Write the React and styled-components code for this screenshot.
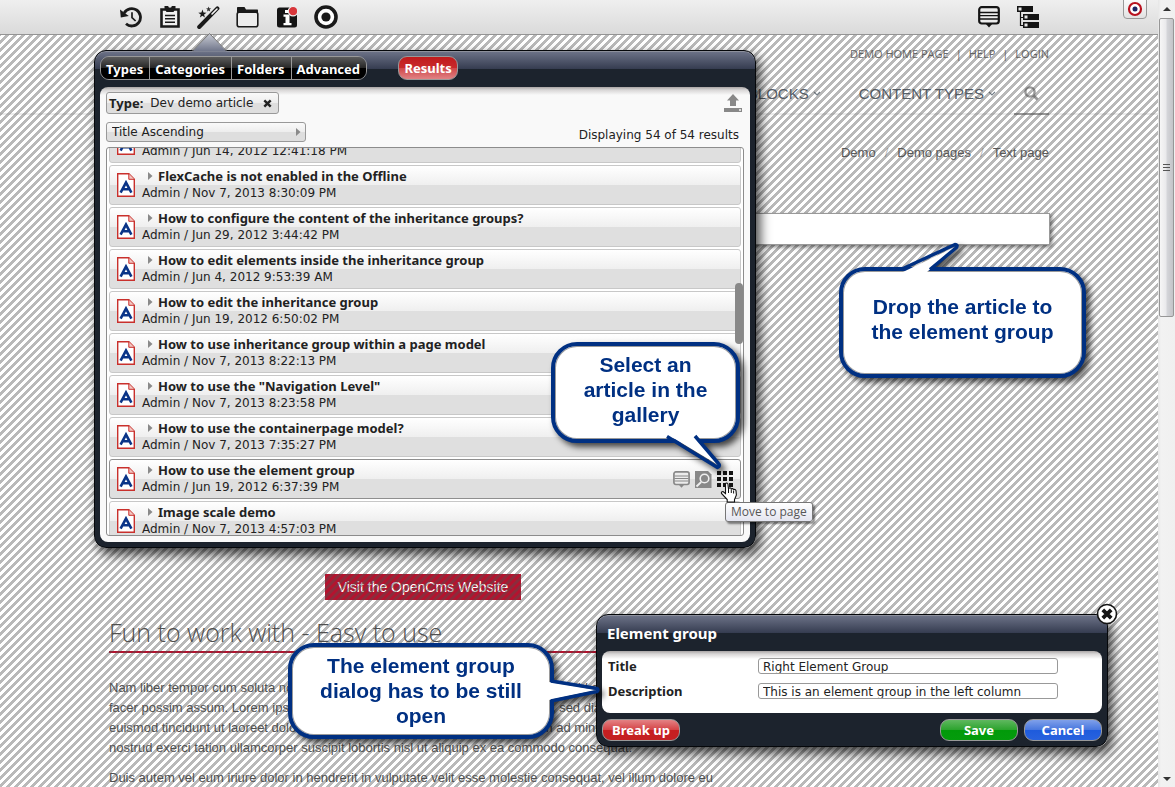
import React from "react";
import styled, { createGlobalStyle, css } from "styled-components";

const UI = `"Noto Sans", "Open Sans", sans-serif`;
const UI_WIDE = `"DejaVu Sans", "Noto Sans", sans-serif`;
const SITE = `"Liberation Sans", Arial, sans-serif`;
const NAVY = "#003082";

const Global = createGlobalStyle`
  * { box-sizing: border-box; }
  body { margin: 0; background: #fff; color: #222; font-family: ${UI}; }
  h1, h2, p, ul { margin: 0; padding: 0; }
  ul { list-style: none; }
  button, input, select { font: inherit; color: inherit; margin: 0; }
  button { cursor: pointer; }
  svg { display: block; }
`;

const Shell = styled.div`
  display: flex;
  height: 100vh;
  overflow: hidden;
`;

const Viewport = styled.div`
  position: relative;
  flex: 1;
  min-width: 0;
  overflow: hidden;
`;

/* ---------- toolbar ---------- */

const Toolbar = styled.header`
  position: relative;
  z-index: 3;
  display: flex;
  justify-content: space-between;
  height: 35px;
  padding: 0 111px;
  background: linear-gradient(#efefef, #dadada);
  border-bottom: 1px solid #949494;
`;

const ToolGroup = styled.div`
  display: flex;
  align-items: center;
`;

const ToolButton = styled.button`
  display: flex;
  align-items: center;
  justify-content: center;
  width: 39px;
  height: 34px;
  padding: 0;
  border: 0;
  background: none;
`;

const Toggle = styled.button`
  position: absolute;
  top: -1px;
  right: 11px;
  display: flex;
  align-items: center;
  justify-content: center;
  width: 24px;
  height: 20px;
  padding: 0;
  border: 1px solid #999;
  border-radius: 0 0 4px 4px;
  background: linear-gradient(#fafafa, #e2e2e2);
`;

/* ---------- web site below the hatch ---------- */

const Site = styled.main`
  position: relative;
  font-family: ${SITE};
  font-size: 13px;
  line-height: 20px;
  color: #505050;
`;

const Hatch = styled.div`
  position: absolute;
  inset: 0;
  z-index: 1;
  pointer-events: none;
  background: linear-gradient(
    135deg,
    rgba(80, 80, 80, 0.4) 25%,
    transparent 25%,
    transparent 50%,
    rgba(80, 80, 80, 0.4) 50%,
    rgba(80, 80, 80, 0.4) 75%,
    transparent 75%
  );
  background-size: 8px 8px;
`;

const Container = styled.div`
  width: 940px;
  margin: 0 auto;
`;

const MetaNav = styled.nav`
  display: flex;
  justify-content: flex-end;
  gap: 7px;
  padding-top: 9px;
  font-family: "Open Sans", sans-serif;
  font-size: 11px;
  color: #6a6a6a;
  a { color: inherit; text-decoration: none; }
`;

const NavBar = styled.div`
  margin-top: 9px;
  border-bottom: 2px solid #ececec;
`;

const Nav = styled.nav`
  display: flex;
  justify-content: flex-end;
  align-items: center;
  height: 42px;
  margin-bottom: -2px;
  font-size: 15px;
  color: #56606a;
`;

const NavLink = styled.a`
  display: flex;
  align-items: center;
  gap: 4px;
  margin-left: 38px;
  color: inherit;
  text-decoration: none;
`;

const SearchLink = styled.a`
  display: flex;
  align-items: center;
  justify-content: center;
  align-self: stretch;
  width: 35px;
  margin-left: 18px;
  border-bottom: 2px solid #999;
  color: #999;
`;

const Breadcrumb = styled.nav`
  display: flex;
  justify-content: flex-end;
  gap: 9px;
  padding-top: 28px;
  color: #5c5c5c;
  a { color: inherit; text-decoration: none; }
  span { color: #bbb; }
`;

const GroupBox = styled.div`
  position: relative;
  z-index: 2;
  height: 32px;
  margin: 50px -1px 0 640px;
  background: #fff;
  border: 1px solid #999;
  box-shadow: 2px 2px 4px rgba(0, 0, 0, 0.5);
`;

const Column = styled.div`
  width: 628px;
  margin-top: 329px;
  p { margin: 0 20px 10px 0; }
`;

const VisitLink = styled.a`
  display: block;
  width: fit-content;
  margin: 0 auto;
  padding: 0 13px;
  font-size: 14px;
  line-height: 26px;
  color: #fff;
  background: #b3142f;
  text-decoration: none;
`;

const Headline = styled.h2`
  margin: 16px 0 25px;
  padding-bottom: 2px;
  border-bottom: 2px solid #b3142f;
  font-family: "Open Sans", sans-serif;
  font-size: 25px;
  font-weight: 300;
  line-height: 33px;
`;

/* ---------- popups ---------- */

const Popup = styled.section`
  position: absolute;
  z-index: 4;
  display: flex;
  flex-direction: column;
  padding: 5px;
  border: 1px solid #05070a;
  border-radius: 12px;
  color: #222;
  font-size: 13px;
  line-height: 16px;
  background: linear-gradient(#6e7489, #353c50 18px, #1c232d 18px);
  box-shadow: inset 0 1px #8d909c, 4px 6px 12px rgba(0, 0, 0, 0.75);
`;

const Gallery = styled(Popup)`
  left: 94px;
  top: 50px;
  width: 662px;
  height: 498px;
`;

const GroupDialog = styled(Popup)`
  left: 596px;
  top: 614px;
  width: 512px;
`;

const Arrow = styled.svg`
  position: absolute;
  left: 97px;
  top: -19px;
`;

const Panel = styled.div`
  border-radius: 8px;
  background: linear-gradient(#a9a5a5, #d8d6d6 3px, ${(p) => p.$bg} 8px);
`;

const TabRow = styled.div`
  display: flex;
  gap: 31px;
  margin-bottom: 7px;
`;

const Tabs = styled.div`
  display: flex;
  height: 24px;
  overflow: hidden;
  border: 1px solid #999;
  border-radius: 9px;
`;

const Tab = styled.button`
  padding: 2px 6px 0 5px;
  border: 0;
  background: linear-gradient(#5c5c5c, #262626 50%, #000 50%);
  color: #fff;
  font-weight: 700;
  & + & { border-left: 1px solid #999; }
`;

const tones = {
  red: "linear-gradient(#e48284, #d44244 50%, #c61e20 50%, #c42022)",
  redActive: "linear-gradient(#c01a1c, #c92a2c 50%, #d04648 50%, #e08284)",
  green: "linear-gradient(#5fb85f, #2ba32d 50%, #029a0a 50%, #049c0c)",
  blue: "linear-gradient(#7fa0ea, #4776de 50%, #1e5bdc 50%, #2862de)",
};

const Pill = styled.button`
  height: ${(p) => p.$height || 22}px;
  min-width: ${(p) => p.$width || 60}px;
  padding: 0 5px;
  border: 1px solid #999;
  border-radius: 9px;
  color: #fff;
  font-weight: 700;
  background: ${(p) => tones[p.$tone]};
`;

const GalleryPanel = styled(Panel)`
  display: flex;
  flex: 1;
  flex-direction: column;
  min-height: 0;
  padding: 5px 6px 6px;
`;

const Split = styled.div`
  display: flex;
  justify-content: space-between;
  align-items: center;
  height: ${(p) => p.$height}px;
  margin-bottom: ${(p) => p.$gap}px;
`;

const raised = css`
  border: 1px solid #999;
  border-radius: 3px;
  background: linear-gradient(#fafafa, #ededed 50%, #dedede 50%);
`;

const Chip = styled.div`
  ${raised}
  display: flex;
  align-items: center;
  height: 22px;
  padding: 0 6px 0 2px;
  font-family: ${UI_WIDE};
  font-size: 12px;
  b { margin-right: 7px; font-family: ${UI}; font-size: 13px; }
  button { display: flex; margin-left: 10px; padding: 0; border: 0; background: none; }
`;

const SelectWrap = styled.label`
  position: relative;
  svg { position: absolute; right: 5px; top: 6px; pointer-events: none; }
`;

const Sort = styled.select`
  ${raised}
  appearance: none;
  display: block;
  width: 200px;
  height: 20px;
  padding: 0 5px;
  font-family: ${UI_WIDE};
  font-size: 12px;
  line-height: 18px;
`;

const Count = styled.p`
  padding: 6px 5px 0 0;
  font-family: ${UI_WIDE};
  font-size: 12px;
`;

const UploadButton = styled.button`
  display: flex;
  margin-right: 2px;
  padding: 0;
  border: 0;
  background: none;
`;

const ListFrame = styled.div`
  position: relative;
  flex: 1;
  min-height: 0;
  overflow: hidden;
  border: 1px solid #8c8c8c;
  border-radius: 3px;
  background: #fff;
`;

const List = styled.ul`
  display: flex;
  flex-direction: column;
  gap: 2px;
  margin-top: -25px;
  padding: 0 2px;
`;

const Row = styled.li`
  display: flex;
  flex: none;
  align-items: center;
  height: 40px;
  padding: 0 7px;
  border: 1px solid ${(p) => (p.$active ? "#8f8f8f" : "#c8c8c8")};
  border-radius: 3px;
  background: linear-gradient(#fff, #efefef 50%, #dfdfdf 50%);
`;

const RowText = styled.div`
  flex: 1;
  padding-left: 7px;
  p { font-family: ${UI_WIDE}; font-size: 12px; line-height: 18px; }
`;

const RowTitle = styled.h2`
  display: flex;
  align-items: center;
  gap: 5px;
  height: 16px;
  padding-left: 6px;
  font-size: 13px;
  font-weight: 700;
  line-height: 16px;
`;

const RowActions = styled.div`
  display: flex;
  gap: 5px;
  button { padding: 0; border: 0; background: none; }
`;

const Thumb = styled.div`
  position: absolute;
  right: 0;
  top: 135px;
  width: 8px;
  height: 61px;
  border-radius: 4px;
  background: #888;
`;

const Title = styled.h1`
  padding: 4px 5px 9px;
  color: #fff;
  font-size: 15px;
  line-height: 18px;
`;

const Form = styled(Panel)`
  display: grid;
  grid-template-columns: 150px 300px;
  align-items: center;
  row-gap: 9px;
  padding: 7px 6px 14px;
  label { font-weight: 700; }
  input {
    height: 16px;
    padding: 1px 4px 0;
    border: 1px solid #999;
    border-radius: 3px;
    background: #fff;
    font-family: ${UI_WIDE};
    font-size: 12px;
  }
`;

const Footer = styled.footer`
  display: flex;
  gap: 6px;
  padding-top: 6px;
  button:first-child { margin-right: auto; }
`;

const Close = styled.button`
  position: absolute;
  right: -11px;
  top: -12px;
  width: 22px;
  height: 22px;
  padding: 0;
  border: 0;
  background: none;
`;

/* ---------- annotations ---------- */

const Bubble = styled.aside`
  position: absolute;
  z-index: 6;
  left: ${(p) => p.$x}px;
  top: ${(p) => p.$y}px;
  display: flex;
  align-items: center;
  justify-content: center;
  width: ${(p) => p.$w}px;
  height: ${(p) => p.$h}px;
  padding-bottom: ${(p) => p.$lift || 0}px;
  border: 4px solid ${NAVY};
  border-radius: 26px;
  background: #fff;
  box-shadow: inset 0 0 0 1px #9a9a9a;
  filter: drop-shadow(4px 4px 3px rgba(0, 0, 0, 0.7));
  color: ${NAVY};
  font-family: ${SITE};
  font-size: 21px;
  font-weight: 700;
  line-height: 25px;
  text-align: center;
`;

const Tail = styled.svg`
  position: absolute;
  left: ${(p) => p.$x}px;
  top: ${(p) => p.$y}px;
  overflow: visible;
`;

const Tooltip = styled.div`
  position: absolute;
  z-index: 5;
  left: 725px;
  top: 502px;
  padding: 0 5px;
  border: 1px solid #767676;
  border-radius: 3px;
  background: linear-gradient(#fff, #e4e5f0);
  box-shadow: 2px 2px 2px rgba(0, 0, 0, 0.45);
  color: #575757;
  font-family: "Open Sans", sans-serif;
  font-size: 12px;
  line-height: 18px;
`;

const Hand = styled.svg`
  position: absolute;
  z-index: 7;
  left: 720px;
  top: 482px;
`;

/* ---------- window scroll bar ---------- */

const ScrollTrack = styled.div`
  display: flex;
  flex-direction: column;
  align-items: center;
  width: 17px;
  padding: 7px 1px 6px;
  background: linear-gradient(90deg, #e6e6e6, #f2f2f2 3px, #f0f0f0);
`;

const ScrollHandle = styled.div`
  display: flex;
  flex-direction: column;
  align-items: center;
  justify-content: center;
  gap: 2px;
  width: 15px;
  height: 299px;
  margin: 7px 0 auto;
  border: 1px solid #979797;
  border-radius: 2px;
  background: linear-gradient(90deg, #f6f6f6, #e9e9eb 48%, #d5d6da 52%, #c4c4c8);
  i { width: 7px; height: 1px; background: #555; }
`;

/* ---------- icons ---------- */

const Chevron = () => (
  <svg width="8" height="6" viewBox="0 0 8 6"><path d="M1 1l3 3 3-3" fill="none" stroke="#76808a" strokeWidth="1.2" /></svg>
);

const Cross = ({ size = 9, color = "#222" }) => (
  <svg width={size} height={size} viewBox="0 0 9 9"><path d="M1.3 1.3l6.4 6.4M7.7 1.3L1.3 7.7" stroke={color} strokeWidth="2.4" /></svg>
);

const Caret = () => (
  <svg width="5" height="8" viewBox="0 0 5 8"><path d="M0 0l4.5 4L0 8z" fill="#8a8a8a" /></svg>
);

const HistoryIcon = () => (
  <svg width="22" height="22" viewBox="0 0 22 22">
    <path d="M4.200 7A8.700 8.700 0 1 1 6 17.800" fill="none" stroke="#1a1a1a" strokeWidth="2.800" />
    <path d="M0 3.400L.8 11.400l8-1.400z" fill="#1a1a1a" />
    <path d="M12 6.200v5.400l3.600 3.400" fill="none" stroke="#1a1a1a" strokeWidth="1.700" />
  </svg>
);

const ClipboardIcon = () => (
  <svg width="20" height="22" viewBox="0 0 20 22">
    <path d="M1.500 3.500h17v17h-17z" fill="#f0f0f0" stroke="#1a1a1a" strokeWidth="2.600" />
    <path d="M4.500 0h3.700a1.800 1.800 0 0 0 3.600 0h3.700v2.600l-2 3.400h-7l-2-3.400z" fill="#1a1a1a" />
    <path d="M5 9.500h10M5 12.800h10M5 16.200h10" stroke="#1a1a1a" strokeWidth="1.500" />
  </svg>
);

const WandIcon = () => (
  <svg width="23" height="23" viewBox="0 0 23 23">
    <path d="M2.200 21L20.400 2.400" stroke="#1a1a1a" strokeWidth="4" strokeLinecap="round" />
    <path d="M15 8l5-5" stroke="#f6f6f6" strokeWidth="1.600" strokeLinecap="round" />
    <path d="M5.500 3.400l1 3 3 .3-2.400 1.800.8 3-2.500-1.700-2.500 1.700.9-3L1.300 6.700l3.100-.2z" fill="#1a1a1a" />
    <path d="M11.600.6l.7 1.700 1.900.1-1.500 1.200.5 1.800-1.600-1-1.600 1 .5-1.800L9 2.400l1.900-.1z" fill="#333" />
  </svg>
);

const FolderIcon = () => (
  <svg width="23" height="22" viewBox="0 0 23 22">
    <path d="M1 7V1.800Q1 1 1.800 1h6.700L10 3.600h11.400q.6 0 .6.600V8H1z" fill="#1a1a1a" />
    <rect x="1.200" y="6.200" width="20.600" height="14.600" rx="2" fill="#ececec" stroke="#1a1a1a" strokeWidth="1.600" />
  </svg>
);

const InfoIcon = () => (
  <svg width="22" height="22" viewBox="0 0 22 22">
    <rect x="1" y="1.500" width="20" height="20" rx="2.500" fill="#141414" />
    <rect x="9" y="4" width="4" height="3" fill="#fff" />
    <path d="M7.500 8.500h6v8.500h2v2.200h-8V17h2v-6.300h-2z" fill="#fff" />
    <circle cx="17" cy="5.200" r="4.700" fill="#d8363a" stroke="#eee" strokeWidth="1.200" />
  </svg>
);

const TargetIcon = () => (
  <svg width="24" height="24" viewBox="0 0 24 24">
    <circle cx="12" cy="12" r="10" fill="#fff" stroke="#1a1a1a" strokeWidth="3.600" />
    <circle cx="12" cy="12" r="4.600" fill="#1a1a1a" />
  </svg>
);

const CommentIcon = ({ size = 22, color = "#141414", fill = "#ececec" }) => (
  <svg width={size} height={size} viewBox="0 0 22 22">
    <path d="M7 17h8l-4 4.600z" fill={color} />
    <rect x="1.200" y="1.200" width="19.600" height="16.300" rx="2.500" fill={fill} stroke={color} strokeWidth="2.200" />
    <path d="M2 6.500h18M2 9.700h18M2 13h18" stroke={color} strokeWidth="1.300" />
  </svg>
);

const TreeIcon = () => (
  <svg width="22" height="22" viewBox="0 0 22 22">
    <path d="M3.500 5v14.500H8M3.500 11.500H8" fill="none" stroke="#141414" strokeWidth="1.200" />
    <path d="M0 0h16v6H0zM6 8h16v6H6zM6 16h16v6H6z" fill="#141414" />
    <path d="M1.500 1.500h3v3h-3zM7.500 9.500h3v3h-3zM7.500 17.500h3v3h-3z" fill="#e6e6e6" />
  </svg>
);

const UploadIcon = () => (
  <svg width="18" height="18" viewBox="0 0 18 18">
    <path d="M9 0l6 6.500h-3V12H6V6.500H3z" fill="#888" />
    <path d="M0 14h18v4H0z" fill="#888" />
    <path d="M15 15h2v2h-2z" fill="#ddd" />
  </svg>
);

const ArticleIcon = () => (
  <svg width="18" height="24" viewBox="0 0 18 24">
    <path d="M.7.700h11.100l5.500 5.600v17H.7z" fill="#fff" stroke="#c9302c" strokeWidth="1.400" />
    <path d="M11.800.700v5.600h5.500" fill="#f3c5c0" stroke="#c9302c" strokeWidth="1" />
    <path d="M3.600 19.600L9 9.600l5.400 10M6 16.200h6" fill="none" stroke="#0a3488" strokeWidth="2.600" />
  </svg>
);

const PreviewIcon = () => (
  <svg width="17" height="17" viewBox="0 0 17 17">
    <path d="M1 0h12l3.500 3.500V17H0V0z" fill="#888" />
    <circle cx="9.500" cy="7.500" r="4.300" fill="none" stroke="#efefef" strokeWidth="1.600" />
    <path d="M6.200 11L1.500 15.500" stroke="#efefef" strokeWidth="1.800" />
  </svg>
);

const GridIcon = () => (
  <svg width="16" height="16" viewBox="0 0 16 16">
    <path d="M0 0h4v4H0zM6 0h4v4H6zM12 0h4v4h-4zM0 6h4v4H0zM6 6h4v4H6zM12 6h4v4h-4zM0 12h4v4H0zM6 12h4v4H6zM12 12h4v4h-4z" fill="#141414" />
  </svg>
);

/* ---------- data ---------- */

const articles = [
  { title: "", info: "Admin / Jun 14, 2012 12:41:18 PM" },
  { title: "FlexCache is not enabled in the Offline", info: "Admin / Nov 7, 2013 8:30:09 PM" },
  { title: "How to configure the content of the inheritance groups?", info: "Admin / Jun 29, 2012 3:44:42 PM" },
  { title: "How to edit elements inside the inheritance group", info: "Admin / Jun 4, 2012 9:53:39 AM" },
  { title: "How to edit the inheritance group", info: "Admin / Jun 19, 2012 6:50:02 PM" },
  { title: "How to use inheritance group within a page model", info: "Admin / Nov 7, 2013 8:22:13 PM" },
  { title: 'How to use the "Navigation Level"', info: "Admin / Nov 7, 2013 8:23:58 PM" },
  { title: "How to use the containerpage model?", info: "Admin / Nov 7, 2013 7:35:27 PM" },
  { title: "How to use the element group", info: "Admin / Jun 19, 2012 6:37:39 PM", active: true },
  { title: "Image scale demo", info: "Admin / Nov 7, 2013 4:57:03 PM" },
];

const Article = ({ title, info, active }) => (
  <Row $active={active}>
    <ArticleIcon />
    <RowText>
      <RowTitle><Caret />{title}</RowTitle>
      <p>{info}</p>
    </RowText>
    {active && (
      <RowActions>
        <button aria-label="Comment"><CommentIcon size={17} color="#888" /></button>
        <button aria-label="Preview"><PreviewIcon /></button>
        <button aria-label="Move to page"><GridIcon /></button>
      </RowActions>
    )}
  </Row>
);

export default function App() {
  return (
    <Shell>
      <Global />
      <Viewport>
        <Toolbar>
          <ToolGroup>
            <ToolButton aria-label="History"><HistoryIcon /></ToolButton>
            <ToolButton aria-label="Clipboard"><ClipboardIcon /></ToolButton>
            <ToolButton aria-label="Gallery"><WandIcon /></ToolButton>
            <ToolButton aria-label="Sitemap folder"><FolderIcon /></ToolButton>
            <ToolButton aria-label="Info"><InfoIcon /></ToolButton>
            <ToolButton aria-label="Publish"><TargetIcon /></ToolButton>
          </ToolGroup>
          <ToolGroup>
            <ToolButton aria-label="Context"><CommentIcon /></ToolButton>
            <ToolButton aria-label="Sitemap"><TreeIcon /></ToolButton>
          </ToolGroup>
          <Toggle aria-label="Toggle toolbar">
            <svg width="16" height="16" viewBox="0 0 16 16">
              <circle cx="8" cy="8" r="6" fill="#fff" stroke="#b8121f" strokeWidth="2.200" />
              <circle cx="8" cy="8" r="2.500" fill="#1b2464" />
            </svg>
          </Toggle>
        </Toolbar>

        <Hatch />
        <Site>
          <Container>
            <MetaNav>
              <a href="#home">DEMO HOME PAGE</a><span>|</span>
              <a href="#help">HELP</a><span>|</span>
              <a href="#login">LOGIN</a>
            </MetaNav>
          </Container>
          <NavBar>
            <Container>
              <Nav>
                <NavLink href="#blocks">BLOCKS<Chevron /></NavLink>
                <NavLink href="#types">CONTENT TYPES<Chevron /></NavLink>
                <SearchLink href="#search" aria-label="Search">
                  <svg width="15" height="15" viewBox="0 0 15 15">
                    <circle cx="6" cy="6" r="4.600" fill="none" stroke="currentColor" strokeWidth="2.400" />
                    <path d="M9.500 9.500l4 4" stroke="currentColor" strokeWidth="2.800" />
                  </svg>
                </SearchLink>
              </Nav>
            </Container>
          </NavBar>
          <Container>
            <Breadcrumb>
              <a href="#demo">Demo</a><span>/</span>
              <a href="#pages">Demo pages</a><span>/</span>
              <a href="#text">Text page</a>
            </Breadcrumb>
            <GroupBox />
            <Column>
              <VisitLink href="#opencms">Visit the OpenCms Website</VisitLink>
              <Headline>Fun to work with - Easy to use</Headline>
              <p>
                Nam liber tempor cum soluta nobis eleifend option congue nihil imperdiet doming id quod mazim placerat
                facer possim assum. Lorem ipsum dolor sit amet, consectetuer adipiscing elit, sed diam nonummy nibh
                euismod tincidunt ut laoreet dolore magna aliquam erat volutpat. Ut wisi enim ad minim veniam, quis
                nostrud exerci tation ullamcorper suscipit lobortis nisl ut aliquip ex ea commodo consequat.
              </p>
              <p>Duis autem vel eum iriure dolor in hendrerit in vulputate velit esse molestie consequat, vel illum dolore eu</p>
            </Column>
          </Container>
        </Site>

        <Gallery>
          <Arrow width="36" height="20" viewBox="0 0 36 20">
            <defs>
              <linearGradient id="tip" x1="0" y1="0" x2="0" y2="1">
                <stop offset="0" stopColor="#c9ccd4" /><stop offset="1" stopColor="#6e7489" />
              </linearGradient>
            </defs>
            <path d="M.5 19.500L17.500 1.500l17 18z" fill="url(#tip)" />
            <path d="M.5 19L17.500 1.500 34.500 19" fill="none" stroke="#777" strokeWidth="1" />
          </Arrow>
          <TabRow>
            <Tabs>
              <Tab>Types</Tab>
              <Tab>Categories</Tab>
              <Tab>Folders</Tab>
              <Tab>Advanced</Tab>
            </Tabs>
            <Pill $tone="redActive" $height={24}>Results</Pill>
          </TabRow>
          <GalleryPanel $bg="#f9f9f9">
            <Split $height={22} $gap={8}>
              <Chip><b>Type:</b>Dev demo article<button aria-label="Remove filter"><Cross /></button></Chip>
              <UploadButton aria-label="Upload"><UploadIcon /></UploadButton>
            </Split>
            <Split $height={20} $gap={5}>
              <SelectWrap>
                <Sort aria-label="Sort order" defaultValue="ta"><option value="ta">Title Ascending</option></Sort>
                <Caret />
              </SelectWrap>
              <Count>Displaying 54 of 54 results</Count>
            </Split>
            <ListFrame>
              <List>{articles.map((a) => <Article key={a.info} {...a} />)}</List>
              <Thumb />
            </ListFrame>
          </GalleryPanel>
        </Gallery>

        <GroupDialog>
          <Title>Element group</Title>
          <Form $bg="#fff">
            <label htmlFor="title">Title</label>
            <input id="title" defaultValue="Right Element Group" />
            <label htmlFor="description">Description</label>
            <input id="description" defaultValue="This is an element group in the left column" />
          </Form>
          <Footer>
            <Pill $tone="red" $width={78}>Break up</Pill>
            <Pill $tone="green" $width={78}>Save</Pill>
            <Pill $tone="blue" $width={78}>Cancel</Pill>
          </Footer>
          <Close aria-label="Close">
            <svg width="22" height="22" viewBox="0 0 22 22">
              <circle cx="11" cy="11" r="9.500" fill="#fff" stroke="#141414" strokeWidth="1.600" />
              <path d="M6.800 6.800l8.400 8.400M15.200 6.800l-8.400 8.400" stroke="#141414" strokeWidth="3.800" />
            </svg>
          </Close>
        </GroupDialog>

        <Bubble $x={551} $y={342} $w={189} $h={101} $lift={7}>
          <Tail $x={115} $y={91} width="52" height="32">
            <path d="M0-1L48 28 24-1" fill="#fff" />
            <path d="M-3-.5L47.500 30.500Q51 29 48 26L25-1" fill="none" stroke={NAVY} strokeWidth="3.500" strokeLinejoin="round" />
          </Tail>
          Select an<br />article in the<br />gallery
        </Bubble>
        <Bubble $x={839} $y={267} $w={247} $h={111} $lift={7}>
          <Tail $x={58} $y={-27} width="60" height="28">
            <path d="M2 28L56 2 26 28z" fill="#fff" />
            <path d="M1 25L54 .5Q57 .5 55.500 3.500L29 25.500" fill="none" stroke={NAVY} strokeWidth="3.500" strokeLinejoin="round" />
          </Tail>
          Drop the article to<br />the element group
        </Bubble>
        <Bubble $x={288} $y={643} $w={266} $h={96} $lift={2}>
          <Tail $x={257} $y={32} width="52" height="24">
            <path d="M0 3L48 11 0 21z" fill="#fff" />
            <path d="M2 2L48 9.500Q50 11 48 12.500L2 22" fill="none" stroke={NAVY} strokeWidth="3.500" strokeLinejoin="round" />
          </Tail>
          The element group<br />dialog has to be still<br />open
        </Bubble>

        <Tooltip role="tooltip">Move to page</Tooltip>
        <Hand width="18" height="21" viewBox="0 0 18 21">
          <path
            d="M5.500 1.500q1.500-1.200 2.400.5l.6 5 .8-1q1.500-.5 2 1 1.600-1 2.300.6 1.800-.6 2.400 1l.4 4.400-1.900 4.500v2.500H7.200v-2.500L1.500 11.500q-.6-2 1.500-2l2.500 2z"
            fill="#fff" stroke="#111" strokeWidth="1.100"
          />
          <path d="M8.500 7v4M11.300 7.500v3.500M13.600 8.500v3" stroke="#111" strokeWidth="1" />
        </Hand>
      </Viewport>

      <ScrollTrack aria-hidden="true">
        <svg width="8" height="4" viewBox="0 0 8 4"><path d="M0 4l4-4 4 4z" fill="#333" /></svg>
        <ScrollHandle><i /><i /><i /></ScrollHandle>
        <svg width="8" height="4" viewBox="0 0 8 4"><path d="M0 0l4 4 4-4z" fill="#333" /></svg>
      </ScrollTrack>
    </Shell>
  );
}
